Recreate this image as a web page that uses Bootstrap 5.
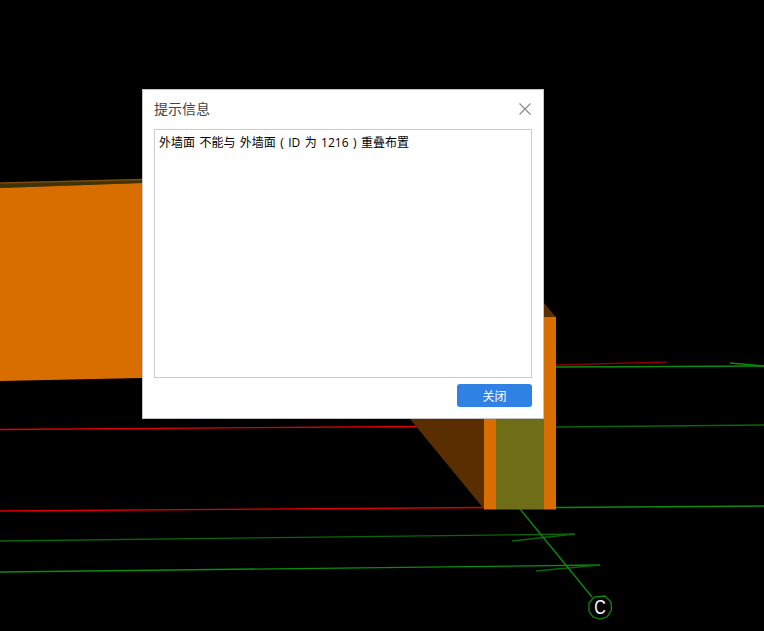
<!DOCTYPE html>
<html lang="zh-CN">
<head>
  <meta charset="UTF-8">
  <meta name="viewport" content="width=device-width, initial-scale=1">
  <title>提示信息</title>
  <link href="https://cdn.jsdelivr.net/npm/bootstrap@5.3.0/dist/css/bootstrap.min.css" rel="stylesheet">
  <style>
    html, body { height: 100%; }
    body {
      background: #000;
      overflow: hidden;
      font-family: "Noto Sans CJK SC", "Liberation Sans", sans-serif;
    }
    .scene { position: relative; width: 764px; height: 631px; }
    .scene-svg { position: absolute; inset: 0; display: block; }
    .scene-svg line { stroke-width: 1.3; }
    .red-a { stroke: #e00000; }
    .red-b { stroke: #8a0000; }
    .green-a { stroke: #0c8c0c; }
    .green-b { stroke: #0a660a; }
    .axis-label { font: 20px "Liberation Sans", sans-serif; fill: #fff; }
    .msg-dialog {
      position: absolute;
      left: 142px;
      top: 89px;
      width: 402px;
      height: 330px;
      background: #fff;
      border: 1px solid #c4c4c4;
      padding: 0 11px 11px 11px;
    }
    .msg-title { height: 37px; margin-bottom: 2px; color: #444; font-size: 14px; }
    .msg-close { width: 14px; height: 14px; padding: 0; border: 0; background: none; display: block; }
    .msg-body {
      height: 249px;
      border: 1px solid #ccc;
      padding: 3px 4px;
      font-family: "Open Sans", "Noto Sans CJK SC", sans-serif;
      font-size: 12px;
      line-height: 20px;
      word-spacing: 1.3px;
      color: #000;
    }
    .msg-btn {
      width: 75px;
      height: 23px;
      padding: 0;
      font-size: 12px;
      line-height: 23px;
      color: #fff;
      background: #2f82e4;
      border: 0;
      border-radius: 3px;
    }
  </style>
</head>
<body>
  <div class="scene">
    <!-- 3D view behind the dialog -->
    <svg class="scene-svg" width="764" height="631" viewBox="0 0 764 631">
      <polygon points="0,183 142,179.500 142,183 0,188" fill="#3d3208"/>
      <line x1="0" y1="183" x2="142" y2="179.500" stroke="#7a4a08"/>
      <polygon points="0,188 142,183 142,378 0,381" fill="#d86e00"/>

      <line class="red-a" x1="0" y1="429.500" x2="420" y2="426.500"/>
      <line class="red-a" x1="0" y1="511" x2="484" y2="507.500"/>
      <line class="red-b" x1="556" y1="365" x2="667" y2="362"/>

      <line class="green-a" x1="556" y1="367" x2="764" y2="366"/>
      <line class="green-a" x1="730" y1="363" x2="764" y2="366"/>
      <line class="green-b" x1="556" y1="427" x2="764" y2="425"/>
      <line class="green-a" x1="556" y1="507.500" x2="764" y2="506"/>
      <line class="green-b" x1="0" y1="541" x2="575" y2="534"/>
      <line class="green-b" x1="512" y1="541" x2="575" y2="534"/>
      <line class="green-a" x1="0" y1="572" x2="600" y2="565"/>
      <line class="green-b" x1="536" y1="571" x2="600" y2="565"/>
      <line class="green-a" x1="520" y1="509" x2="592" y2="597"/>

      <polygon points="410,419 484,419 484,509" fill="#5a2e00"/>
      <polygon points="544,303 556,317 544,317" fill="#5a2e00"/>
      <rect x="484" y="419" width="12" height="90.500" fill="#d86e00"/>
      <rect x="496" y="419" width="48" height="90.500" fill="#6f6e16"/>
      <rect x="544" y="317" width="12" height="192.500" fill="#d86e00"/>

      <polygon points="605,596 611,602 611.500,610 607,617 600,619 593,617 589,611 589,603 594,597" fill="none" stroke="#0c8c0c" stroke-width="1.300"/>
      <text class="axis-label" transform="translate(600 614) scale(.8 1)" text-anchor="middle">C</text>
    </svg>

    <div class="msg-dialog d-flex flex-column">
      <div class="msg-title d-flex align-items-center justify-content-between">
        <span>提示信息</span>
        <button type="button" class="msg-close" aria-label="关闭">
          <svg width="14" height="14" viewBox="0 0 14 14" class="d-block"><path d="M1.500 1.500 12.500 12.500M12.500 1.500 1.500 12.500" stroke="#888" stroke-width="1.100" fill="none"/></svg>
        </button>
      </div>
      <div class="msg-body">外墙面 不能与 外墙面 ( ID 为 1216 ) 重叠布置</div>
      <div class="d-flex justify-content-end mt-auto">
        <button type="button" class="btn msg-btn">关闭</button>
      </div>
    </div>
  </div>
  <script src="https://cdn.jsdelivr.net/npm/bootstrap@5.3.0/dist/js/bootstrap.bundle.min.js"></script>
</body>
</html>
